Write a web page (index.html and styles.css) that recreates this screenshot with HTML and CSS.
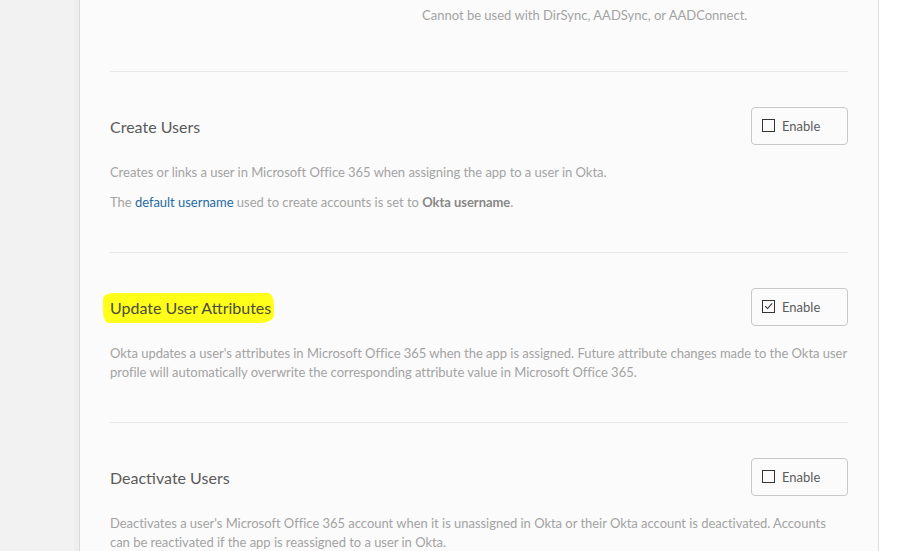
FILE: index.html
```html
<!DOCTYPE html>
<html>
<head>
<meta charset="utf-8">
<link rel="stylesheet" href="styles.css">
</head>
<body>
<div class="page">
  <div class="sidebar"><div class="sidebar-edge"></div></div>
  <main class="panel">
    <section class="top">
      <p class="note">Cannot be used with DirSync, AADSync, or AADConnect.</p>
    </section>

    <section class="feature">
      <div class="feature-head">
        <h3 class="feature-title">Create Users</h3>
        <button class="enable"><span class="box"></span>Enable</button>
      </div>
      <p class="desc">Creates or links a user in Microsoft Office 365 when assigning the app to a user in Okta.</p>
      <p class="desc">The <a class="link" href="#">default username</a> used to create accounts is set to <strong class="strong">Okta username</strong>.</p>
    </section>

    <section class="feature">
      <div class="feature-head">
        <h3 class="feature-title"><span class="highlight">Update User Attributes</span></h3>
        <button class="enable"><span class="box checked"><svg viewBox="0 0 12 12" width="12" height="12"><path d="M2.4 6.2 L5 8.8 L10 3.2" fill="none" stroke="#333" stroke-width="1.2"/></svg></span>Enable</button>
      </div>
      <p class="desc">Okta updates a user's attributes in Microsoft Office 365 when the app is assigned. Future attribute changes made to the Okta user profile will automatically overwrite the corresponding attribute value in Microsoft Office 365.</p>
    </section>

    <section class="feature">
      <div class="feature-head">
        <h3 class="feature-title">Deactivate Users</h3>
        <button class="enable"><span class="box"></span>Enable</button>
      </div>
      <p class="desc">Deactivates a user's Microsoft Office 365 account when it is unassigned in Okta or their Okta account is deactivated. Accounts can be reactivated if the app is reassigned to a user in Okta.</p>
    </section>
  </main>
  <div class="rightside"></div>
</div>
</body>
</html>
```

FILE: styles.css
```css
* { box-sizing: border-box; }
html, body { margin: 0; padding: 0; height: 100%; overflow: hidden; }
body {
  font-family: Lato, "Open Sans", Arial, sans-serif;
  background: #ffffff;
}
.page {
  display: flex;
  height: 551px;
  overflow: hidden;
}
.sidebar {
  width: 80px;
  flex: none;
  background: #f2f2f2;
  display: flex;
  justify-content: flex-end;
}
.sidebar-edge {
  width: 6px;
  background: #eeeeee;
  border-right: 1px solid #d9d9d9;
}
.panel {
  width: 799px;
  flex: none;
  background: #fbfbfb;
  border-right: 1px solid #dedede;
  padding: 0 30px;
}
.rightside { flex: 1; background: #ffffff; }

.top {
  padding: 6px 0 46px 312px;
  border-bottom: 1px solid #e8e8e8;
}
.note {
  margin: 0;
  font-size: 13px;
  line-height: 19px;
  color: #a3a3a3;
}

.feature {
  padding: 35px 0 40px;
  border-bottom: 1px solid #e8e8e8;
}
.feature-head {
  display: flex;
  align-items: center;
  justify-content: space-between;
  height: 38px;
  margin-bottom: 18px;
}
.feature-title {
  margin: 0;
  font-size: 16px;
  font-weight: normal;
  color: #5a5a5a;
  padding-top: 1px;
}
.highlight {
  display: inline-block;
  background: #ffff1a;
  margin: 0 -3px 0 -7px;
  padding: 5px 3px 6px 7px;
  border-radius: 10px 6px 14px 6px / 6px 12px 8px 12px;
  color: #4a4a3a;
}
.enable {
  width: 97px;
  height: 38px;
  border: 1px solid #c8c8c8;
  border-radius: 4px;
  background: #fbfbfb;
  font-family: inherit;
  font-size: 13px;
  color: #5c5c5c;
  display: flex;
  align-items: center;
  padding: 0 0 0 10px;
  gap: 7px;
}
.box {
  width: 13px;
  height: 13px;
  border: 1px solid #333333;
  display: inline-flex;
  align-items: center;
  justify-content: center;
  margin-top: -2px;
}
.box svg { display: block; }
.desc {
  margin: 0 0 11px;
  font-size: 13px;
  line-height: 19px;
  letter-spacing: -0.03px;
  color: #a3a3a3;
}
.desc:last-child { margin-bottom: 0; }
.link { color: #1f6aa3; text-decoration: none; }
.strong { color: #888888; font-weight: bold; }
```
